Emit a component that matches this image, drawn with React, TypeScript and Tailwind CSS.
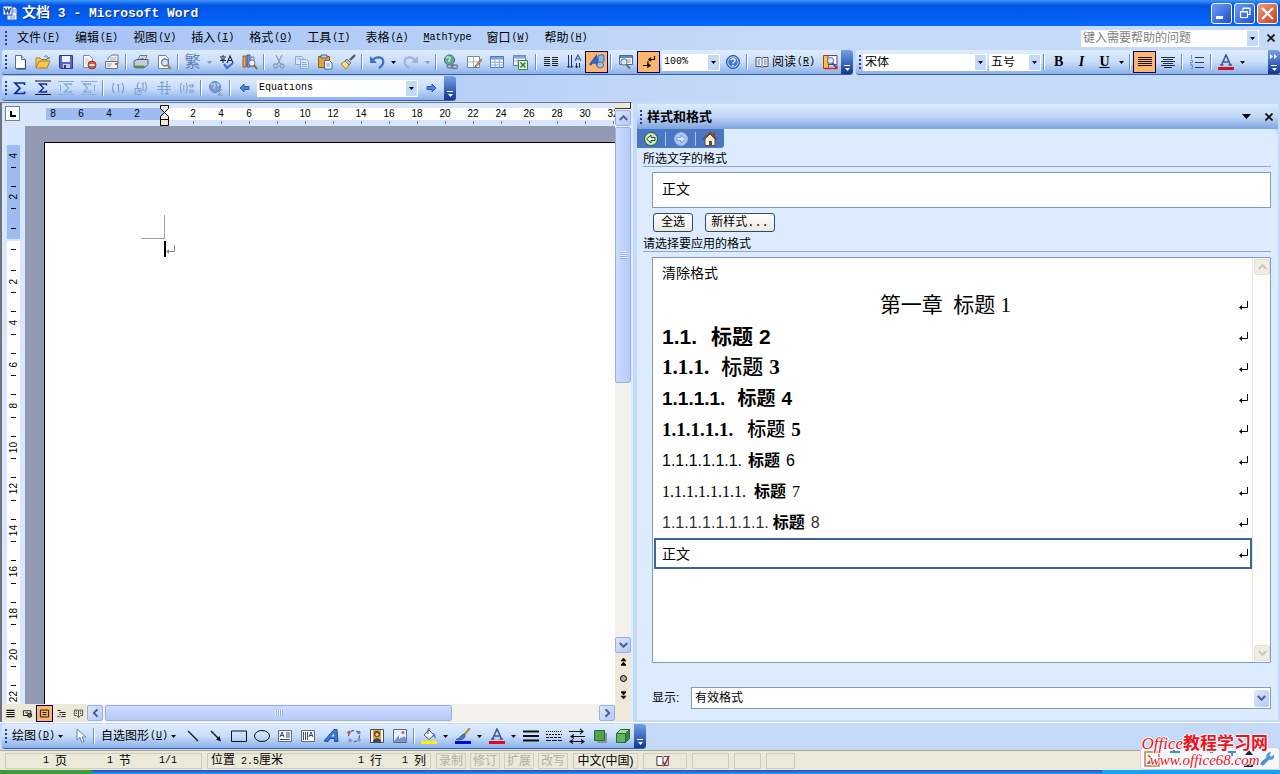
import type { ReactNode } from "react";
import { clsx } from "clsx";

const CJK = "font-['Liberation_Sans','Noto_Sans_CJK_SC',sans-serif]";
const MONO = "font-['Liberation_Mono','Noto_Sans_CJK_SC',monospace]";
const SERIF = "font-['Liberation_Serif','Noto_Sans_CJK_SC',serif]";

// 16x16 glyphs used by every toolbar
const icons: Record<string, ReactNode> = {
  word: (
    <>
      <path d="M5 2h8l2 2v11H5z" fill="#e8f0ff" stroke="#3b5fa8" />
      <path d="M8 11h5M8 13h5M11 5h3M11 7h3" stroke="#7d9bd4" />
      <path d="M1 1h9v9H1z" fill="#fff" stroke="#2a56b0" />
      <path d="M2.500 3l1.500 5 1.500-4 1.500 4 1.500-5" fill="none" stroke="#1f4fb5" strokeWidth="1.400" />
    </>
  ),
  new: (
    <>
      <path d="M3.500 1.500h6l4 4v9h-10z" fill="#fff" stroke="#5b6f95" />
      <path d="M9.500 1.500v4h4" fill="#c5d4ee" stroke="#5b6f95" />
      <path d="M13.500 6v9h-9" fill="none" stroke="#2d3d63" />
    </>
  ),
  open: (
    <>
      <path d="M1 14V4h4l1 1.500h6V8" fill="#f6d56f" stroke="#a87b1c" />
      <path d="M1 14l3-7h11l-3 7z" fill="#fbc64f" stroke="#a87b1c" />
      <path d="M9 3c2-2 4-1 4.500 1.500M15 3l-1.500 2L11.500 4" fill="none" stroke="#5e6f91" />
    </>
  ),
  save: (
    <>
      <path d="M1.500 1.500h13v13h-12l-1-1z" fill="#5b63c4" stroke="#32388a" />
      <path d="M4 2h8v6H4z" fill="#eef1fb" />
      <path d="M5 10h7v4H5z" fill="#c9cdea" />
      <path d="M6 11h2v3H6z" fill="#32388a" />
    </>
  ),
  permission: (
    <>
      <path d="M2.500 1.500h6l3 3v9h-9z" fill="#fff" stroke="#7b8cad" />
      <path d="M4 5h4M4 7h5M4 9h4" stroke="#b7c4de" />
      <circle cx="11" cy="11" r="4" fill="#d8553a" stroke="#a23420" />
      <path d="M8.500 11h5" stroke="#fff" strokeWidth="1.800" />
    </>
  ),
  mail: (
    <>
      <path d="M4 6V4l4-3h6v9" fill="#f8f8f2" stroke="#6d7487" />
      <path d="M1.500 7.500h12v7h-12z" fill="#f4f1e4" stroke="#6d7487" />
      <path d="M3 10h5M3 12h4M6 4h6M6 6h6" stroke="#9aa5bf" />
      <path d="M11 9h2v2h-2z" fill="#d45a43" />
    </>
  ),
  print: (
    <>
      <path d="M5 6l2-4.500h7L12 6" fill="#fff" stroke="#67758f" />
      <path d="M1 7l3-1.500h11v5L12 13H1z" fill="#c7cdd6" stroke="#525d70" />
      <path d="M2 12h9v2H2z" fill="#4fa34b" stroke="#3e6e3c" strokeWidth=".6" />
      <path d="M8 3h4M7 4.500h4" stroke="#8ea0c3" />
    </>
  ),
  preview: (
    <>
      <path d="M2.500 1.500h7l3 3v10h-10z" fill="#fff" stroke="#6b7da0" />
      <circle cx="9" cy="8.500" r="3.500" fill="#d3e6f7" stroke="#66788f" strokeWidth="1.300" />
      <path d="M11.500 11l3.500 4" stroke="#a8793f" strokeWidth="2" />
    </>
  ),
  research: (
    <>
      <path d="M1 2h3v11H1z" fill="#e9a95e" stroke="#8e5a2a" />
      <path d="M5 1h3v12H5z" fill="#7b8fd4" stroke="#40509c" />
      <path d="M9 3h3v10H9z" fill="#d7dff0" stroke="#7484a8" />
      <circle cx="10" cy="9" r="3" fill="#e6f2fb" stroke="#6f7c90" />
      <path d="M12 11l3 4" stroke="#9a5f2c" strokeWidth="2" />
    </>
  ),
  cut: (
    <g fill="none" stroke="#8a9dbf" strokeWidth="1.300">
      <path d="M5 1l4.500 9M11 1L6.500 10" />
      <circle cx="4.500" cy="12" r="2" />
      <circle cx="11" cy="12" r="2" />
    </g>
  ),
  copy: (
    <g fill="#d9e5f8" stroke="#8fa5cc">
      <path d="M1.500 2.500h6l2 2v6h-8z" />
      <path d="M6.500 5.500h6l2 2v7h-8z" />
      <path d="M8 8.500h4M8 10.500h5M8 12.500h5M3 5h4" />
    </g>
  ),
  paste: (
    <>
      <path d="M1.500 2.500h11v11h-11z" fill="#e0a33b" stroke="#8c5f1b" />
      <path d="M4 1h6v3H4z" fill="#c4cad8" stroke="#5b6479" />
      <path d="M7.500 6.500h5l2.500 2.500v6H7.500z" fill="#f4f8ff" stroke="#4b64a0" />
      <path d="M9 10h4M9 12h4" stroke="#7b94cc" />
    </>
  ),
  brush: (
    <>
      <path d="M15 1l-5 5" stroke="#5d5a55" strokeWidth="2.400" />
      <path d="M7 5l4 4-2 2-4-4z" fill="#b9bfc9" stroke="#6d6f78" />
      <path d="M5 7l4 4-3 4-5-5z" fill="#f7e07c" stroke="#a28426" />
    </>
  ),
  undo: (
    <>
      <path d="M4 6c3-4 9-3 10 0s-1 6-4 8" fill="none" stroke="#3d6fd0" strokeWidth="2.200" />
      <path d="M1 2v7h7z" fill="#3d6fd0" />
    </>
  ),
  redo: (
    <>
      <path d="M12 6C9 2 3 3 2 6s1 6 4 8" fill="none" stroke="#9fb4da" strokeWidth="2.200" />
      <path d="M15 2v7H8z" fill="#9fb4da" />
    </>
  ),
  link: (
    <>
      <circle cx="6.500" cy="6" r="5" fill="#5fae8c" stroke="#38678f" />
      <path d="M3 4c2-2 3-1 4 0s-2 2-1 4" fill="none" stroke="#c9ebd2" strokeWidth="1.500" />
      <g fill="none" stroke="#6f7b8f" strokeWidth="1.400">
        <rect x="4" y="10.500" width="6" height="3.500" rx="1.700" />
        <rect x="8.500" y="11" width="6" height="3.500" rx="1.700" />
      </g>
    </>
  ),
  borders: (
    <>
      <path d="M1.500 2.500h12v11h-12z" fill="#fff" stroke="#6e88bb" />
      <path d="M1.500 8h12M7.500 2.500v11" stroke="#9db1d8" />
      <path d="M15 5l-5 6-2 3 3-2 5-6z" fill="#e9a74c" stroke="#8a5f24" strokeWidth=".8" />
    </>
  ),
  table: (
    <>
      <path d="M1.500 2.500h13v11h-13z" fill="#fff" stroke="#5273b5" />
      <path d="M2 3h12v2.500H2z" fill="#7da0e0" />
      <path d="M1.500 8.300h13M1.500 11h13M6 5v8.500M10.300 5v8.500" stroke="#8ba5d6" />
    </>
  ),
  excel: (
    <>
      <path d="M1.500 1.500h12v10h-12z" fill="#fff" stroke="#5273b5" />
      <path d="M2 2h11v2H2zM1.500 7h12M6 4v7" fill="#7da0e0" stroke="#8ba5d6" />
      <path d="M6.500 6.500h9v9h-9z" fill="#e9f6e6" stroke="#3a8840" />
      <path d="M8.500 8.500l5 5M13.500 8.500l-5 5" stroke="#27822f" strokeWidth="1.600" />
    </>
  ),
  columns: (
    <path d="M1 3.500h6M1 5.500h6M1 7.500h6M1 9.500h6M1 11.500h6M9 3.500h6M9 5.500h6M9 7.500h6M9 9.500h6M9 11.500h6" stroke="#222" />
  ),
  textdir: (
    <g fill="none" stroke="#26324f">
      <path d="M2.500 1v12M5.500 1v12M10.500 9v5M13.500 9v5" />
      <path d="M1 12l1.500 2L4 12M4.500 12l1 2 1.500-2M9 12l1.500 2 1.500-2" strokeWidth=".8" />
      <path d="M9 7l3-6 3 6M10 5h4" stroke="#3b5fae" strokeWidth="1.200" />
    </g>
  ),
  drawing: (
    <>
      <path d="M9 2l4-1.500 2 1v6l-4 2-2-1z" fill="#8fb0ea" stroke="#3a63b6" />
      <path d="M1 11L7 3l1.500 9M4 8.500h4" fill="none" stroke="#2f5cb4" strokeWidth="2.400" />
      <rect x="8" y="8" width="6.500" height="6" rx="3" fill="#a7bedf" stroke="#4870b4" />
    </>
  ),
  docmap: (
    <>
      <path d="M1.500 1.500h13v9h-13z" fill="#fff" stroke="#4668a8" />
      <path d="M2 2h12v2H2z" fill="#5f86cc" />
      <path d="M9 6h4M9 8h4" stroke="#8aa0c6" />
      <circle cx="6" cy="8" r="3.200" fill="#dcebf7" stroke="#5b6f7c" />
      <path d="M8 10.500l4 4" stroke="#56786a" strokeWidth="1.800" />
    </>
  ),
  marks: (
    <g fill="#1c1208" stroke="#1c1208" strokeWidth="1.200">
      <path d="M13.500 2v3.500H8" fill="none" />
      <path d="M7 5.500l3-2v4z" strokeWidth=".5" />
      <path d="M7 7v4.500H2" fill="none" />
      <path d="M10 11.500l-3.500-2.300v4.600z" strokeWidth=".5" />
    </g>
  ),
  help: (
    <>
      <circle cx="8" cy="8" r="6.500" fill="#3a78d8" stroke="#1f4f9f" />
      <circle cx="8" cy="8" r="5.200" fill="none" stroke="#cfe1ff" strokeWidth=".9" />
      <path d="M6 6.500C6 4 10 4 10 6.500 10 8 8 8 8 9.500M8 11v1.200" fill="none" stroke="#fff" strokeWidth="1.500" />
    </>
  ),
  book: (
    <>
      <path d="M2 3.500h5l1 1 1-1h5v9H9l-1 1-1-1H2z" fill="#f2f5fb" stroke="#4c4f63" />
      <path d="M8 4v9M3.500 6H6M3.500 8H6M3.500 10H6M10 6h2.500M10 8h2.500M10 10h2.500" stroke="#6d7490" />
    </>
  ),
  reference: (
    <>
      <path d="M1.500 1.500h5v13h-5z" fill="#f5c93c" stroke="#b4352a" />
      <path d="M6 1.500h9v9H6z" fill="#f4f6fc" stroke="#7f3a6a" />
      <circle cx="8.500" cy="6.500" r="3" fill="#d9eafa" stroke="#4d65a8" />
      <path d="M10.500 9l4 5" stroke="#3c4c9a" strokeWidth="1.800" />
      <path d="M2 14.500h13v-3" fill="none" stroke="#d02c20" strokeWidth="1.500" />
    </>
  ),
  justify: <path d="M1 3.500h14M1 5.500h14M1 7.500h14M1 9.500h14M1 11.500h14" stroke="#1b1206" />,
  center: <path d="M1 3.500h14M3 5.500h10M1 7.500h14M3 9.500h10M1 11.500h14M4 13.500h8" stroke="#222b42" />,
  list: (
    <>
      <path d="M6 3.500h9M6 8.500h9M6 13.500h9" stroke="#333c52" />
      <path d="M2.500 1v4M1.500 6.500h2v2h-2v2h2M1.500 11.500h2v3h-2" fill="none" stroke="#6b8dcc" />
    </>
  ),
  sigma: <path d="M12.500 5V3H3l5 5.200L3 13.500h9.500v-2" fill="none" stroke="#0c2aa8" strokeWidth="1.700" />,
  sigmaDisplay: (
    <>
      <path d="M0 1h16M0 14.500h16" stroke="#111" />
      <path d="M11.500 5.500V4H4.500l4 4-4 4h7v-1.500" fill="none" stroke="#0c2aa8" strokeWidth="1.400" />
    </>
  ),
  sigmaLeft: (
    <g fill="none" stroke="#8ba9d8">
      <path d="M0 1.500h16M0 14.500h16M2.500 5v6M1.500 6l1-1" />
      <path d="M13.500 5.500V4h-7l4 4-4 4h7v-1.500" strokeWidth="1.300" />
    </g>
  ),
  sigmaRight: (
    <g fill="none" stroke="#8ba9d8">
      <path d="M0 1.500h16M0 14.500h16M13.500 5v6M12.500 6l1-1" />
      <path d="M9.500 5.500V4h-7l4 4-4 4h7v-1.500" strokeWidth="1.300" />
    </g>
  ),
  eqNum: <path d="M4 3Q1 8 4 13M12 3q3 5 0 10M7 5.500l1.500-1V12" fill="none" stroke="#7f9fd0" strokeWidth="1.200" />,
  eqRef: (
    <g fill="none" stroke="#7f9fd0">
      <path d="M6 2Q3 6 5 9M12 2q3 5 0 10M8.500 4l1.500-1v8" strokeWidth="1.200" />
      <path d="M2 8.500h6v6H2zM3.500 13l3-3M4 10h2.500v2.500" />
    </g>
  ),
  eqBreak: <path d="M1 6.500h14M1 9.500h14M6 1v14M11 1v14M4 2.500h4M9 13.500h4" fill="none" stroke="#7f9fd0" strokeWidth="1.200" />,
  eqUpdate: (
    <g fill="none" stroke="#7f9fd0" strokeWidth="1.100">
      <path d="M2.500 3Q0 8 2.500 13M7 3q2.500 5 0 10M4.800 5v6" />
      <path d="M10 7c0-3 4-3 4 0M14 4v3h-3M15 10c0 3-4 3-4 0M11 13v-3h3" />
    </g>
  ),
  globe: (
    <>
      <circle cx="7" cy="7" r="5.500" fill="#7a9bd0" stroke="#6185c2" />
      <path d="M3 5c2-2 4-1 4 0s-2 2-1 4M9 3l2 3" fill="none" stroke="#c4d8f4" strokeWidth="1.400" />
      <path d="M14.500 10H10l2.500 2.500L10 15h5" fill="none" stroke="#6f91c9" />
    </>
  ),
  left: <path d="M3 8l4-4v2.500h5v3H7V12z" fill="#4a86e0" stroke="#2a5ab4" />,
  right: <path d="M13 8L9 4v2.500H4v3h5V12z" fill="#4a86e0" stroke="#2a5ab4" />,
  pointer: <path d="M5 1v11l3-2.500 2 5 2-1-2-4.500h4z" fill="#fff" stroke="#6a7ea6" />,
  line: <path d="M3 3l10 10" stroke="#111" strokeWidth="1.200" />,
  arrow: (
    <>
      <path d="M3 3l8 8" stroke="#111" strokeWidth="1.200" />
      <path d="M13 13.500L8 11.500l3.500-3.500z" fill="#111" />
    </>
  ),
  rect: <path d="M.5 3h15v10.500H.5z" fill="none" stroke="#111" />,
  ellipse: <ellipse cx="8" cy="8" rx="7.500" ry="5.500" fill="none" stroke="#111" />,
  textbox: (
    <>
      <path d="M1.500 2.500h13v11h-13z" fill="#f5f8fd" stroke="#606b80" />
      <path d="M3 9l2-5 2 5M3.500 7.500h3M9 5h4M9 7h4M9 9h4M3 11.500h10" fill="none" stroke="#333b50" strokeWidth=".9" />
    </>
  ),
  vtextbox: (
    <>
      <path d="M1.500 2.500h13v11h-13z" fill="#f5f8fd" stroke="#606b80" />
      <path d="M3.500 4v8M5.500 4v8M7.500 4v8M9 9l2-5 2 5M9.500 7.500h3" fill="none" stroke="#333b50" strokeWidth=".9" />
    </>
  ),
  wordart: (
    <>
      <path d="M1 13L11 1.500h3l1 12h-3.500l-.2-3H7l-2 3z" fill="#3b78d8" stroke="#1f4c9c" />
      <path d="M8.500 8.500l2.500-3 .2 3z" fill="#dcebff" />
    </>
  ),
  diagram: (
    <>
      <circle cx="8" cy="8" r="5.500" fill="none" stroke="#4c69a8" strokeDasharray="3 2.500" strokeWidth="1.300" />
      <circle cx="3" cy="4.500" r="1.700" fill="#b55b45" />
      <circle cx="13" cy="4.500" r="1.700" fill="#5a83c7" />
      <circle cx="13" cy="12" r="1.700" fill="#8c9bb8" />
      <circle cx="4" cy="12.500" r="1.700" fill="#8c9bb8" />
    </>
  ),
  clipart: (
    <>
      <path d="M1.500 1.500h13v13h-13z" fill="#f8f3e6" stroke="#444c60" />
      <path d="M4 2h8v12H4z" fill="#dca43f" />
      <circle cx="8" cy="6" r="3" fill="#5b3821" />
      <circle cx="8" cy="6.500" r="1.700" fill="#f1c89c" />
      <path d="M4 14c0-5 8-5 8 0z" fill="#37445c" />
    </>
  ),
  picture: (
    <>
      <path d="M1.500 1.500h13v13h-13z" fill="#eaf1fb" stroke="#5a6a8c" />
      <path d="M2 13l5-6 3 3 2-2 2.500 3v3H2z" fill="#7d93bd" />
      <path d="M7 7l2 2-2 2z" fill="#fff" />
      <circle cx="11" cy="4.500" r="1.500" fill="#c55d4f" />
    </>
  ),
  fill: (
    <>
      <path d="M0 13h16v3H0z" fill="#fff200" />
      <path d="M3 7l5-5 5 5-5 4.500z" fill="#f3f5fa" stroke="#4a566f" />
      <path d="M7 6V1.500c0-1.500 2-1.500 2 0" fill="none" stroke="#4a566f" />
      <path d="M12.500 5c2 1 2.500 3 2 6-1-2-2-3-3-3z" fill="#4a7bd0" />
    </>
  ),
  pen: (
    <>
      <path d="M0 13h16v3H0z" fill="#0008e8" />
      <path d="M15 0l-6 7" stroke="#b58246" strokeWidth="2" />
      <path d="M9.500 6.500C7 6 6 8 4 10.500l-3 1c3 1 8 0 9-3z" fill="#4b78c4" stroke="#35578f" />
    </>
  ),
  fontColor: (
    <>
      <path d="M0 13h16v3H0z" fill="#d9101c" />
      <path d="M3.500 11L8 1l4.500 10M5.500 8h5M2 11h3.500M10.500 11H14" fill="none" stroke="#39599b" strokeWidth="1.600" />
    </>
  ),
  weight: <path d="M0 3.500h16M0 8h16M0 12.500h16" stroke="#111" strokeWidth="2" />,
  dash: (
    <g stroke="#111">
      <path d="M0 3.500h16" strokeDasharray="1 1" />
      <path d="M0 6.500h16" strokeDasharray="2 1" />
      <path d="M0 9.500h16" strokeDasharray="3 1" />
      <path d="M0 12.500h16" strokeDasharray="5 1" />
    </g>
  ),
  arrows: (
    <g fill="none" stroke="#111" strokeWidth="1.100">
      <path d="M0 3.500h14M11 1l3 2.500L11 6M16 8.500H2M5 6.500L2 8.500l3 2M1 13.500h14M4 11.500l-3 2 3 2M12 11.500l3 2-3 2" />
    </g>
  ),
  shadow: (
    <>
      <path d="M5 5h10v10H5z" fill="#8793a6" />
      <path d="M2.500 2.500h10v10h-10z" fill="#4ba551" stroke="#276b2e" />
    </>
  ),
  cube: (
    <g stroke="#276b2e">
      <path d="M1.500 5.500h9v9h-9z" fill="#5fb564" />
      <path d="M1.500 5.500l4-4h9l-4 4z" fill="#a4dca4" />
      <path d="M10.500 5.500l4-4v9l-4 4z" fill="#37893f" />
    </g>
  ),
  spell: (
    <>
      <path d="M1 3h6M4 1v2M2 5h4M4 5v4M1 6.500h6" fill="none" stroke="#1f2740" />
      <path d="M8 9l3-7 3 7M9 6.500h4" fill="none" stroke="#1f2740" strokeWidth="1.200" />
      <path d="M5 10l3 4 6-5" fill="none" stroke="#4070cc" strokeWidth="2.200" />
    </>
  ),
  proof: (
    <>
      <path d="M1 3h6l1 1 1-1h5v10H9l-1 1-1-1H1z" fill="#fff" stroke="#222" />
      <path d="M8 4v9" stroke="#222" />
      <path d="M8 9l2 3 5-10" fill="none" stroke="#b3242b" strokeWidth="1.800" />
    </>
  ),
  backNav: (
    <>
      <circle cx="8" cy="8" r="6.500" fill="#d2efbf" stroke="#24622b" />
      <path d="M3.500 8L8 4v2.500h4v3H8V12z" fill="#fff" stroke="#1d4a22" />
    </>
  ),
  fwdNav: (
    <>
      <circle cx="8" cy="8" r="6.500" fill="#b4c8ee" stroke="#9bb4e4" />
      <path d="M12.500 8L8 4v2.500H4v3h4V12z" fill="#dce7fb" stroke="#7d9bd6" />
    </>
  ),
  home: (
    <>
      <path d="M11 1.500h2v5h-2z" fill="#9c3f2c" />
      <path d="M3 8l5-5 5 5v6.500H3z" fill="#fff4dd" stroke="#5a4632" />
      <path d="M1 8.500L8 1.500l7 7" fill="none" stroke="#7a4a2e" strokeWidth="1.700" />
      <path d="M7 10h3v4.500H7z" fill="#6a4a38" />
    </>
  ),
  viewNormal: <path d="M2 3.500h12M2 6.500h12M2 9.500h12M2 12.500h12" stroke="#111" strokeWidth="1.600" />,
  viewWeb: (
    <g stroke="#111" fill="none" strokeWidth="1.300">
      <path d="M2 4h11v7H2zM5 7h4" />
      <circle cx="11" cy="10.500" r="3" fill="#666" />
    </g>
  ),
  viewPrint: <path d="M2 3h12v10H2zM5 6.500h6M5 9.500h6" fill="none" stroke="#111" strokeWidth="1.400" />,
  viewOutline: <path d="M2 3.500h5M5 6.500h9M5 9.500h2M9 9.500h5M2 12.500h3M7 12.500h7" stroke="#111" strokeWidth="1.300" />,
  viewRead: <path d="M2 3h5l1 1 1-1h5v8h-3l-3 3-3-3H2zM8 4v9M4 5.500h2M4 8h2M10 5.500h2M10 8h2" fill="none" stroke="#111" />,
};

function Icon({ name, className = "size-4" }: { name: string; className?: string }) {
  return (
    <svg viewBox="0 0 16 16" className={clsx("shrink-0", className)} aria-hidden="true">
      {icons[name]}
    </svg>
  );
}

function Tool({ name, active }: { name: string; active?: boolean }) {
  return (
    <button
      aria-label={name}
      className={clsx(
        "flex h-[22px] w-[23px] shrink-0 items-center justify-center",
        active && "border border-[#000080] bg-[#fdb76c]"
      )}
    >
      <Icon name={name} />
    </button>
  );
}

const Sep = () => <span className="mx-[2px] h-4 w-[2px] shrink-0 border-l border-[#6a8ccb] bg-white" />;

function Caret({ className = "text-black" }: { className?: string }) {
  return (
    <svg viewBox="0 0 5 3" className={clsx("h-[3px] w-[5px] shrink-0", className)} aria-hidden="true">
      <path d="M0 0h5L2.500 3z" fill="currentColor" />
    </svg>
  );
}

function Drop({ dim }: { dim?: boolean }) {
  return (
    <button aria-label="更多" className="flex h-[22px] w-[11px] shrink-0 items-center justify-center">
      <Caret className={dim ? "text-[#7e97c4]" : "text-black"} />
    </button>
  );
}

const Grip = () => (
  <span className="flex shrink-0 flex-col gap-[2px] px-px">
    {[0, 1, 2, 3].map((i) => (
      <i key={i} className="size-[2px] bg-[#27418f]" />
    ))}
  </span>
);

// Rounded dark cap that closes a toolbar
function Cap({ chevrons }: { chevrons?: boolean }) {
  return (
    <button
      aria-label="工具栏选项"
      className="flex w-3 shrink-0 flex-col items-center justify-end gap-[2px] self-stretch rounded-r-[3px] bg-linear-to-b from-[#76a0ec] to-[#0f3790] pb-[3px]"
    >
      {chevrons && (
        <svg viewBox="0 0 8 5" className="mb-1 h-[5px] w-2" aria-hidden="true">
          <path d="M0 0l3 2.500L0 5zM4 0l3 2.500L4 5z" fill="#fff" />
        </svg>
      )}
      <span className="h-px w-[6px] bg-white" />
      <Caret className="text-white" />
    </button>
  );
}

function Bar({ children, className }: { children: ReactNode; className?: string }) {
  return (
    <div
      className={clsx(
        "flex h-[25px] items-center rounded-[3px] border-b border-[#3b619c] bg-linear-to-b from-[#dfecfd] via-[#c9defa] to-[#8bb0ea] pl-[2px]",
        className
      )}
    >
      {children}
    </div>
  );
}

function Combo({ label, value, className, mono }: { label: string; value: string; className: string; mono?: boolean }) {
  return (
    <div className={clsx("flex h-[17px] items-center bg-white", className)}>
      <select
        aria-label={label}
        className={clsx("h-full min-w-0 flex-1 appearance-none bg-white pl-[2px] leading-none outline-none", mono ? `${MONO} text-[10px]` : "text-xs")}
      >
        <option>{value}</option>
      </select>
      <span className="mr-px flex h-[15px] w-[11px] items-center justify-center bg-[#c4d9f7]">
        <Caret />
      </span>
    </div>
  );
}

function KeyLabel({ text, k }: { text: string; k?: string }) {
  return (
    <span className="flex items-center gap-[1px] whitespace-nowrap">
      {text}
      {k && (
        <span className={`${MONO} text-[10px]`}>
          (<u>{k}</u>)
        </span>
      )}
    </span>
  );
}

const menus = [
  ["文件", "F"],
  ["编辑", "E"],
  ["视图", "V"],
  ["插入", "I"],
  ["格式", "O"],
  ["工具", "T"],
  ["表格", "A"],
  ["MathType", ""],
  ["窗口", "W"],
  ["帮助", "H"],
];

function TitleBar() {
  const box = "flex size-[21px] items-center justify-center rounded-[3px] border border-white";
  return (
    <header className="flex h-[26px] shrink-0 items-center bg-linear-to-b from-[#3f96ff] via-[#0054e3] via-20% to-[#0668ff] pr-[2px] pl-[2px] text-white">
      <Icon name="word" />
      <h1 className="ml-1 flex-1 text-sm font-bold whitespace-pre [text-shadow:1px_1px_#0a2a80]">
        文档<span className={`${MONO} text-[13px]`}> 3 - Microsoft Word</span>
      </h1>
      <div className="flex gap-[2px]">
        <button aria-label="最小化" className={clsx(box, "bg-linear-to-br from-[#6e9cf5] to-[#1b4fd0]")}>
          <span className="mt-2 mr-1 h-[3px] w-[7px] bg-white" />
        </button>
        <button aria-label="还原" className={clsx(box, "bg-linear-to-br from-[#6e9cf5] to-[#1b4fd0]")}>
          <svg viewBox="0 0 12 12" className="size-3" aria-hidden="true">
            <path d="M4 3.500V1.500h7v6H9M4 1h7M1.500 5h7v5.500h-7zM1 4.500h8" fill="none" stroke="#fff" strokeWidth="1.200" />
          </svg>
        </button>
        <button aria-label="关闭" className={clsx(box, "bg-linear-to-br from-[#f09a7e] to-[#c63a14]")}>
          <svg viewBox="0 0 12 12" className="size-[13px]" aria-hidden="true">
            <path d="M1 1l10 10M11 1L1 11" stroke="#fff" strokeWidth="2" />
          </svg>
        </button>
      </div>
    </header>
  );
}

function MenuBar() {
  return (
    <nav className="flex h-6 items-center pl-1">
      <Grip />
      <div className="flex gap-px pl-[2px]">
        {menus.map(([text, k]) => (
          <button key={text} className={clsx("px-[7px]", !k && `${MONO} text-[10px]`)}>
            {k ? (
              <KeyLabel text={text} k={k} />
            ) : (
              <span>
                <u>M</u>athType
              </span>
            )}
          </button>
        ))}
      </div>
      <div className="mr-[7px] ml-auto flex h-[17px] w-[178px] items-center bg-white">
        <input aria-label="帮助" placeholder="键入需要帮助的问题" className="min-w-0 flex-1 pl-[2px] text-xs outline-none placeholder:text-[#808080]" />
        <span className="mr-px flex h-[15px] w-[11px] items-center justify-center bg-[#c4d9f7]">
          <Caret />
        </span>
      </div>
      <CloseX />
    </nav>
  );
}

function CloseX() {
  return (
    <button aria-label="关闭" className="mr-1 flex size-[10px] items-center justify-center">
      <svg viewBox="0 0 8 8" className="size-2" aria-hidden="true">
        <path d="M.5 .5l7 7M7.500 .5l-7 7" stroke="#000" strokeWidth="1.600" />
      </svg>
    </button>
  );
}

function StandardBars() {
  const letter = "flex h-[22px] w-[23px] items-center justify-center text-sm font-bold";
  return (
    <div className="flex gap-[3px] pl-[2px]">
      <Bar>
        <Grip />
        <div className="flex items-center">
          {["new", "open", "save", "permission", "mail"].map((n) => (
            <Tool key={n} name={n} />
          ))}
          <Sep />
          <Tool name="print" />
          <Tool name="preview" />
          <Sep />
          <button className="w-[23px] text-base leading-none text-[#5f7fb8]">繁</button>
          <Drop dim />
          <Tool name="spell" />
          <Tool name="research" />
          <Sep />
          {["cut", "copy", "paste", "brush"].map((n) => (
            <Tool key={n} name={n} />
          ))}
          <Sep />
          <Tool name="undo" />
          <Drop />
          <Tool name="redo" />
          <Drop dim />
          <Sep />
          {["link", "borders", "table", "excel"].map((n) => (
            <Tool key={n} name={n} />
          ))}
          <span className="w-[2px]" />
          <Sep />
          <Tool name="columns" />
          <Tool name="textdir" />
          <Tool name="drawing" active />
          <Sep />
          <Tool name="docmap" />
          <Tool name="marks" active />
        </div>
        <Combo label="显示比例" value="100%" className="mr-px ml-[2px] w-[58px]" mono />
        <Tool name="help" />
        <Sep />
        <button className="ml-1 flex items-center gap-[2px]">
          <Icon name="book" />
          <KeyLabel text="阅读" k="R" />
        </button>
        <span className="ml-[3px] flex">
          <Tool name="reference" />
        </span>
        <Cap />
      </Bar>
      <Bar className="min-w-0 flex-1 rounded-r-none">
        <Grip />
        <Combo label="字体" value="宋体" className="ml-px w-[124px]" />
        <Combo label="字号" value="五号" className="ml-[2px] w-[52px]" />
        <Sep />
        <button className={clsx(letter, SERIF)}>B</button>
        <button className={clsx(letter, SERIF, "italic")}>I</button>
        <button className={clsx(letter, SERIF, "underline")}>U</button>
        <Drop />
        <Sep />
        <Tool name="justify" active />
        <Tool name="center" />
        <Sep />
        <Tool name="list" />
        <Sep />
        <Tool name="fontColor" />
        <Drop />
        <span className="flex-1" />
        <Cap chevrons />
      </Bar>
    </div>
  );
}

function MathBar() {
  return (
    <div className="flex pt-px pl-[2px]">
      <Bar>
        <Grip />
        {["sigma", "sigmaDisplay", "sigmaLeft", "sigmaRight"].map((n) => (
          <Tool key={n} name={n} />
        ))}
        <Sep />
        {["eqNum", "eqRef", "eqBreak", "eqUpdate"].map((n) => (
          <Tool key={n} name={n} />
        ))}
        <Sep />
        <Tool name="globe" />
        <Sep />
        <Tool name="left" />
        <Combo label="公式样式" value="Equations" className="mx-px w-[161px]" mono />
        <Tool name="right" />
        <span className="w-[2px]" />
        <Cap />
      </Bar>
    </div>
  );
}

function Chevron({ className }: { className?: string }) {
  return (
    <svg viewBox="0 0 9 6" className={clsx("h-[6px] w-[9px]", className)} aria-hidden="true">
      <path d="M.8 1l3.700 3.700L8.200 1" fill="none" stroke="currentColor" strokeWidth="2" />
    </svg>
  );
}

const scrollBtn =
  "flex size-4 shrink-0 items-center justify-center rounded-[2px] border border-[#98b1e4] bg-linear-to-br from-[#dce6ff] to-[#b4c8f6] text-[#4d6185]";

function HorizontalRuler() {
  return (
    <div className="flex h-[23px] bg-[#d8e7fb]">
      <div className="w-[44px] shrink-0 pt-[3px] pl-[3px]">
        <button aria-label="制表符" className="flex size-[15px] items-center justify-center border border-[#5b87b5] bg-white">
          <span className="size-[6px] border-b-2 border-l-2 border-black" />
        </button>
      </div>
      <div className="mt-[5px] flex h-3 w-[118px] shrink-0 justify-end overflow-hidden bg-[#9dbcf2] pr-[13px] text-[10px] leading-3">
        {[8, 6, 4, 2].map((n) => (
          <span key={n} className="w-7 shrink-0 text-center">
            {n}
          </span>
        ))}
      </div>
      <div className="relative min-w-0 flex-1">
        <div className="flex h-full overflow-hidden pt-[5px]">
          <div className="flex h-3 flex-1 bg-white pl-[15px] text-[10px] leading-3">
            {Array.from({ length: 16 }, (_, i) => (
              <span key={i} className="flex w-7 shrink-0 flex-col items-center">
                {(i + 1) * 2}
                <i className="mt-px h-[3px] w-px shrink-0 bg-[#6f7f9d]" />
              </span>
            ))}
          </div>
        </div>
        <svg viewBox="0 0 9 21" className="absolute top-[2px] -left-1 h-[21px] w-[9px]" aria-hidden="true">
          <path d="M.5 .5h8v3l-4 4-4-4zM.5 14.500v-3l4-4 4 4v3zM.5 14.500h8v6h-8z" fill="#ece9d8" stroke="#000" />
        </svg>
      </div>
    </div>
  );
}

function RulerCell({ n }: { n: number | string }) {
  return (
    <span className="flex min-h-0 flex-1 flex-col items-center justify-between py-[9px]">
      <i className="h-px w-[5px] bg-black" />
      <b className="rotate-180 text-[10px] leading-3 font-normal [writing-mode:vertical-rl]">{n}</b>
      <i className="h-px w-[5px] bg-black" />
    </span>
  );
}

function VerticalRuler() {
  return (
    <div className="flex w-[23px] shrink-0 flex-col overflow-hidden bg-[#d8e7fb] pt-[19px] pl-[5px]">
      <div className="flex h-[94px] w-[13px] shrink-0 flex-col justify-end overflow-hidden bg-[#9dbcf2]">
        <div className="flex h-[104px] shrink-0 flex-col">
          <div className="flex h-[83px] flex-col">
            <RulerCell n={4} />
            <RulerCell n={2} />
          </div>
          <i className="mx-auto mt-[10px] h-px w-[5px] bg-black" />
        </div>
      </div>
      <div className="mt-[2px] flex w-[13px] flex-1 flex-col overflow-hidden bg-white">
        <i className="mx-auto mt-2 mb-[11px] h-px w-[5px] shrink-0 bg-black" />
        <div className="flex h-[456px] shrink-0 flex-col">
          {Array.from({ length: 11 }, (_, i) => (
            <RulerCell key={i} n={(i + 1) * 2} />
          ))}
        </div>
      </div>
    </div>
  );
}

function VerticalScroll() {
  return (
    <div className="flex w-4 shrink-0 flex-col items-center bg-[#f3f2ec]">
      <span className="h-[6px] w-4 shrink-0 border-r border-b border-[#333] bg-[#ece9d8]" />
      <button aria-label="向上滚动" className={clsx(scrollBtn, "mt-px")}>
        <Chevron className="rotate-180" />
      </button>
      <div className="flex min-h-0 w-full flex-1 flex-col">
        <div className="mt-px flex h-1/2 w-full flex-col items-center justify-center gap-px rounded-[2px] border border-[#98b1e4] bg-linear-to-r from-[#cddbff] to-[#b6c9f8]">
          {[0, 1, 2, 3].map((i) => (
            <i key={i} className="h-px w-[7px] bg-[#eef4fe] shadow-[0_1px_#8caee6]" />
          ))}
        </div>
      </div>
      <button aria-label="向下滚动" className={scrollBtn}>
        <Chevron />
      </button>
      <div className="flex h-[69px] w-full shrink-0 flex-col items-center justify-start gap-[9px] bg-[#ece9d8] pt-[5px]">
        <button aria-label="前一页">
          <svg viewBox="0 0 7 8" className="h-2 w-[7px]" aria-hidden="true">
            <path d="M3.500 0L6 3H1zM3.500 4L6 7H1zM1 7.500h5" fill="#000" stroke="#000" strokeWidth=".6" />
          </svg>
        </button>
        <button aria-label="选择浏览对象" className="size-[7px] rounded-full border border-black bg-[#aaa]" />
        <button aria-label="下一页">
          <svg viewBox="0 0 7 8" className="h-2 w-[7px] rotate-180" aria-hidden="true">
            <path d="M3.500 0L6 3H1zM3.500 4L6 7H1zM1 7.500h5" fill="#000" stroke="#000" strokeWidth=".6" />
          </svg>
        </button>
      </div>
    </div>
  );
}

function ReturnMark({ className }: { className?: string }) {
  return (
    <svg viewBox="0 0 9 9" className={clsx("size-[9px] shrink-0", className)} aria-hidden="true">
      <path d="M8.500 0v6.500H2" fill="none" stroke="currentColor" />
      <path d="M0 6.500l3-2.500v5z" fill="currentColor" />
    </svg>
  );
}

function Editor() {
  return (
    <section className="flex min-h-0 min-w-0 border-t border-r-2 border-l-2 border-t-[#6f747c] border-r-[#dcebfd] border-l-[#6f747c] bg-[#ece9d8]">
      <div className="flex min-w-0 flex-1 flex-col">
        <HorizontalRuler />
        <div className="flex min-h-0 flex-1">
          <VerticalRuler />
          <div className="flex min-h-0 min-w-0 flex-1 bg-[#9299b1] pt-4 pl-[19px]">
            <article className="min-w-0 flex-1 border-t border-l border-black bg-white pt-[72px] pl-24">
              <div className="size-6 border-r border-b border-[#a0a0a0]" />
              <p className="mt-[2px] ml-[23px] flex h-4 items-center">
                <span className="h-4 w-[2px] bg-black" />
                <ReturnMark className="text-[#8a8a8a]" />
              </p>
            </article>
          </div>
        </div>
        <div className="flex h-[18px] shrink-0 items-center bg-[#f3f2ec]">
          <div className="flex h-full items-center bg-[#ece9d8]">
            {["viewNormal", "viewWeb", "viewPrint", "viewOutline", "viewRead"].map((n) => (
              <button
                key={n}
                aria-label={n}
                className={clsx("flex h-[17px] w-[17px] items-center justify-center", n === "viewPrint" && "border border-[#000080] bg-[#fdb76c]")}
              >
                <Icon name={n} className="size-[11px]" />
              </button>
            ))}
          </div>
          <button aria-label="向左滚动" className={scrollBtn}>
            <Chevron className="rotate-90" />
          </button>
          <div className="flex min-w-0 flex-1">
            <div className="ml-[2px] flex h-4 w-[70%] items-center justify-center gap-px rounded-[2px] border border-[#98b1e4] bg-linear-to-b from-[#cddbff] to-[#b6c9f8]">
              {[0, 1, 2, 3].map((i) => (
                <i key={i} className="h-[6px] w-px bg-[#eef4fe] shadow-[1px_0_#8caee6]" />
              ))}
            </div>
          </div>
          <button aria-label="向右滚动" className={scrollBtn}>
            <Chevron className="-rotate-90" />
          </button>
        </div>
      </div>
      <VerticalScroll />
    </section>
  );
}

// num / name / tail carry their own fonts, as the style preview does
const styles = [
  { num: "1.1.", name: "标题", tail: "2", numCls: "text-[21px] font-bold mr-[14px]", nameCls: "text-[21px] font-bold", tailCls: "text-[21px] font-bold" },
  { num: "1.1.1.", name: "标题", tail: "3", serif: true, numCls: "text-[21px] font-bold mr-3", nameCls: "text-[21px] font-medium", tailCls: "text-[21px] font-bold" },
  { num: "1.1.1.1.", name: "标题", tail: "4", numCls: "text-[19px] font-bold mr-3", nameCls: "text-[19px] font-bold", tailCls: "text-[19px] font-bold" },
  { num: "1.1.1.1.1.", name: "标题", tail: "5", serif: true, numCls: "text-[19px] font-bold mr-[14px]", nameCls: "text-[19px] font-medium", tailCls: "text-[19px] font-bold" },
  { num: "1.1.1.1.1.1.", name: "标题", tail: "6", numCls: "text-base mr-[6px]", nameCls: "text-base font-bold", tailCls: "text-base" },
  { num: "1.1.1.1.1.1.1.", name: "标题", tail: "7", serif: true, numCls: "text-base mr-2", nameCls: "text-base font-bold", tailCls: "text-base" },
  { num: "1.1.1.1.1.1.1.1.", name: "标题", tail: "8", numCls: "text-base mr-1 text-[#333]", nameCls: "text-base font-bold", tailCls: "text-base text-[#333]" },
];

function StylePane() {
  const row = "flex h-[31px] w-full items-center leading-none whitespace-nowrap";
  const plain = "pr-1 pl-2";
  const quiet = "flex size-4 items-center justify-center rounded-[2px] border border-[#e2e0d6] bg-[#f0eee4] text-[#c9c7ba]";
  return (
    <aside className="flex min-h-0 min-w-0 flex-col pt-[2px] pr-[2px] pb-[2px] pl-1">
      <div className="flex h-[25px] shrink-0 items-center bg-linear-to-b from-[#dcebfd] via-[#c0d7f7] to-[#7ea3de] pl-[2px]">
        <Grip />
        <h2 className="flex-1 pl-1 text-[13px] font-bold">样式和格式</h2>
        <button aria-label="其他任务窗格" className="mr-[13px]">
          <svg viewBox="0 0 9 5" className="h-[5px] w-[9px]" aria-hidden="true">
            <path d="M0 0h9L4.500 5z" />
          </svg>
        </button>
        <CloseX />
      </div>
      <div className="flex min-h-0 flex-1 flex-col rounded-tr-lg bg-[#dcebfd]">
        <div className="flex h-[19px] w-[87px] shrink-0 items-center justify-between rounded-br-[3px] bg-[#4a76c4] px-[6px]">
          <button aria-label="后退">
            <Icon name="backNav" />
          </button>
          <span className="h-[14px] w-px bg-[#a9c4f0]" />
          <button aria-label="前进">
            <Icon name="fwdNav" />
          </button>
          <span className="h-[14px] w-px bg-[#a9c4f0]" />
          <button aria-label="主页">
            <Icon name="home" />
          </button>
        </div>
        <div className="flex min-h-0 flex-1 flex-col pr-[7px] pl-[6px]">
          <h3 className="mt-1 h-[15px] shrink-0 border-b border-[#8ba6cf] text-xs leading-[14px]">所选文字的格式</h3>
          <div className="mt-[5px] ml-[9px] flex h-9 shrink-0 items-center border border-[#7f9db9] bg-white pb-[2px] pl-[9px] text-sm">正文</div>
          <div className="mt-1 ml-[10px] flex h-5 shrink-0 items-center gap-3">
            <button className="h-[19px] w-10 rounded-[3px] border border-[#2d4a75] bg-linear-to-b from-white to-[#ebe9df] text-xs leading-none">全选</button>
            <button className="h-[19px] w-[70px] rounded-[3px] border border-[#2d4a75] bg-linear-to-b from-white to-[#ebe9df] text-xs leading-none">
              新样式<span className={MONO}>...</span>
            </button>
          </div>
          <h3 className="mt-[5px] h-[15px] shrink-0 border-b border-[#8ba6cf] text-xs leading-[14px]">请选择要应用的格式</h3>
          <div className="mt-[5px] ml-[9px] flex min-h-0 flex-1 border border-[#7f9db9] bg-white">
            <ul className="min-w-0 flex-1 overflow-hidden pt-px pl-px">
              <li>
                <button className={clsx(row, plain, "pb-[3px] text-sm")}>清除格式</button>
              </li>
              <li>
                <button className={clsx(row, plain, SERIF, "text-[21px]")}>
                  <span className="flex-1 pr-[10px] text-center whitespace-pre">第一章  标题 1</span>
                  <ReturnMark />
                </button>
              </li>
              {styles.map((s) => (
                <li key={s.tail}>
                  <button className={clsx(row, plain, s.serif && SERIF)}>
                    <span className="flex flex-1 items-baseline">
                      <span className={s.numCls}>{s.num}</span>
                      <span className={s.nameCls}>{s.name}</span>
                      <span className={clsx("ml-[6px]", s.tailCls)}>{s.tail}</span>
                    </span>
                    <ReturnMark />
                  </button>
                </li>
              ))}
              <li>
                <button className={clsx(row, "border-2 border-[#3a669e] pr-[2px] pl-[6px] text-sm")}>
                  <span className="flex-1 text-left">正文</span>
                  <ReturnMark />
                </button>
              </li>
            </ul>
            <div className="flex w-[18px] shrink-0 flex-col justify-between border-l border-[#eceade] bg-[#fdfdfb] p-px">
              <button aria-label="向上滚动" className={quiet}>
                <Chevron className="rotate-180" />
              </button>
              <button aria-label="向下滚动" className={quiet}>
                <Chevron />
              </button>
            </div>
          </div>
          <div className="mt-6 mb-[11px] ml-[9px] flex h-[22px] shrink-0 items-center text-xs">
            <label htmlFor="show" className="w-[39px] shrink-0">
              显示:
            </label>
            <div className="flex h-[22px] min-w-0 flex-1 items-center border border-[#7f9db9] bg-white pr-px">
              <select id="show" className="min-w-0 flex-1 appearance-none bg-white pl-[3px] outline-none">
                <option>有效格式</option>
              </select>
              <span className="flex h-[17px] w-[15px] items-center justify-center rounded-[2px] bg-linear-to-br from-[#dce6ff] to-[#b4c8f6] text-[#4d6185]">
                <Chevron />
              </span>
            </div>
          </div>
        </div>
      </div>
    </aside>
  );
}

function DrawingBar() {
  return (
    <div className="flex shrink-0 border-t border-white bg-[#c4daf8] pt-px pb-px pl-[2px]">
      <Bar>
        <Grip />
        <button className="ml-1">
          <KeyLabel text="绘图" k="D" />
        </button>
        <Drop />
        <span className="w-[2px]" />
        <Tool name="pointer" />
        <Sep />
        <button className="ml-1">
          <KeyLabel text="自选图形" k="U" />
        </button>
        <Drop />
        <span className="w-[2px]" />
        {["line", "arrow", "rect", "ellipse", "textbox", "vtextbox", "wordart", "diagram", "clipart", "picture"].map((n) => (
          <Tool key={n} name={n} />
        ))}
        <Sep />
        {["fill", "pen", "fontColor"].map((n) => (
          <span key={n} className="flex">
            <Tool name={n} />
            <Drop />
          </span>
        ))}
        {["weight", "dash", "arrows", "shadow", "cube"].map((n) => (
          <Tool key={n} name={n} />
        ))}
        <Cap />
      </Bar>
    </div>
  );
}

function StatusBar() {
  const cell = "flex h-4 shrink-0 items-center border border-[#d0cdbd] leading-none";
  const num = `${MONO} text-[10px]`;
  return (
    <footer className="flex h-5 shrink-0 items-center gap-[5px] border-t border-[#a9a692] bg-[#ece9d8] pl-[5px]">
      <div className={clsx(cell, "w-[197px] justify-end pr-6")}>
        <span className="mr-10 flex items-center gap-[6px]">
          <span className={num}>1</span>页
        </span>
        <span className="mr-7 flex items-center gap-[6px]">
          <span className={num}>1</span>节
        </span>
        <span className={num}>1/1</span>
      </div>
      <div className={clsx(cell, "w-[224px] justify-between pr-1 pl-[3px]")}>
        <span>
          位置<span className={num}> 2.5</span>厘米
        </span>
        <span className="flex gap-5">
          <span className="flex items-center gap-[6px]">
            <span className={num}>1</span>行
          </span>
          <span className="flex items-center gap-[6px]">
            <span className={num}>1</span>列
          </span>
        </span>
      </div>
      <div className="flex gap-1 text-[#b3b09e]">
        {["录制", "修订", "扩展", "改写"].map((t) => (
          <button key={t} className={clsx(cell, "w-[30px] justify-center")}>
            {t}
          </button>
        ))}
      </div>
      <div className={clsx(cell, "w-[65px] justify-center whitespace-nowrap")}>中文(中国)</div>
      <div className={clsx(cell, "w-[44px] pl-[10px]")}>
        <Icon name="proof" className="h-[14px] w-[18px]" />
      </div>
      <div className={clsx(cell, "w-[37px]")} />
      <div className={clsx(cell, "w-[27px]")} />
      <div className={clsx(cell, "w-[29px]")} />
    </footer>
  );
}

// Language bar in the corner with the site mark lying over it
function Watermark() {
  return (
    <div className="absolute right-0 bottom-1">
      <div className="flex h-[23px] w-[140px] items-center justify-between rounded-sm border border-[#c9d3e4] bg-[#f5f9fe] pr-1 pl-[3px]">
        <svg viewBox="0 0 128 20" className="h-5 w-32" aria-hidden="true">
          <path d="M1 3h14v14H1z" fill="#fff" stroke="#c67a4c" strokeWidth="1.500" />
          <path d="M4 6l4 4-4 4h8" fill="none" stroke="#a8582c" strokeWidth="1.500" />
          <path d="M26 3h10M30 1v3M66 3h3M84 3h8M88 3v4" stroke="#3f93b8" strokeWidth="2" />
          <path d="M105 1l4 5h-8zM100 15h9v3h-9z" fill="#223" />
        </svg>
        <svg viewBox="0 0 16 16" className="-ml-3 size-[15px] shrink-0" aria-hidden="true">
          <path d="M1 15c-1-2 0-3 1-4l5-4c-1-3 1-6 5-6l-2 3 2 2 3-2c1 4-2 6-5 5L5 14c-1 1-2 2-4 1z" fill="#4b97d6" />
        </svg>
      </div>
      <a
        href="#office68"
        className={`${SERIF} absolute right-3 bottom-[2px] text-center whitespace-nowrap text-[#f0101a] [text-shadow:1px_0_#fff,-1px_0_#fff,0_1px_#fff,0_-1px_#fff]`}
      >
        <span className="block text-[17px] leading-[18px] font-bold">
          <i className="font-normal">Office</i>教程学习网
        </span>
        <i className="block text-[15px] leading-[15px]">www.office68.com</i>
      </a>
    </div>
  );
}

export default function App() {
  return (
    <div className={`${CJK} relative flex h-screen flex-col overflow-hidden bg-[#c4daf8] text-xs leading-none text-black`}>
      <TitleBar />
      <div className="shrink-0 bg-linear-to-r from-[#a5c1f5] to-[#c4daf8] to-60%">
        <MenuBar />
        <StandardBars />
        <MathBar />
      </div>
      <main className="grid min-h-0 flex-1 grid-cols-[minmax(0,633fr)_minmax(0,647fr)] grid-rows-[minmax(0,1fr)] pt-px">
        <Editor />
        <StylePane />
      </main>
      <DrawingBar />
      <StatusBar />
      <div className="flex h-1 shrink-0 bg-linear-to-b from-[#1a52c4] to-[#3f8cf3]">
        <span className="w-[93px] rounded-tr bg-[#3f9a3d]" />
        <span className="ml-auto w-[178px] bg-[#18a0ee]" />
      </div>
      <Watermark />
    </div>
  );
}
